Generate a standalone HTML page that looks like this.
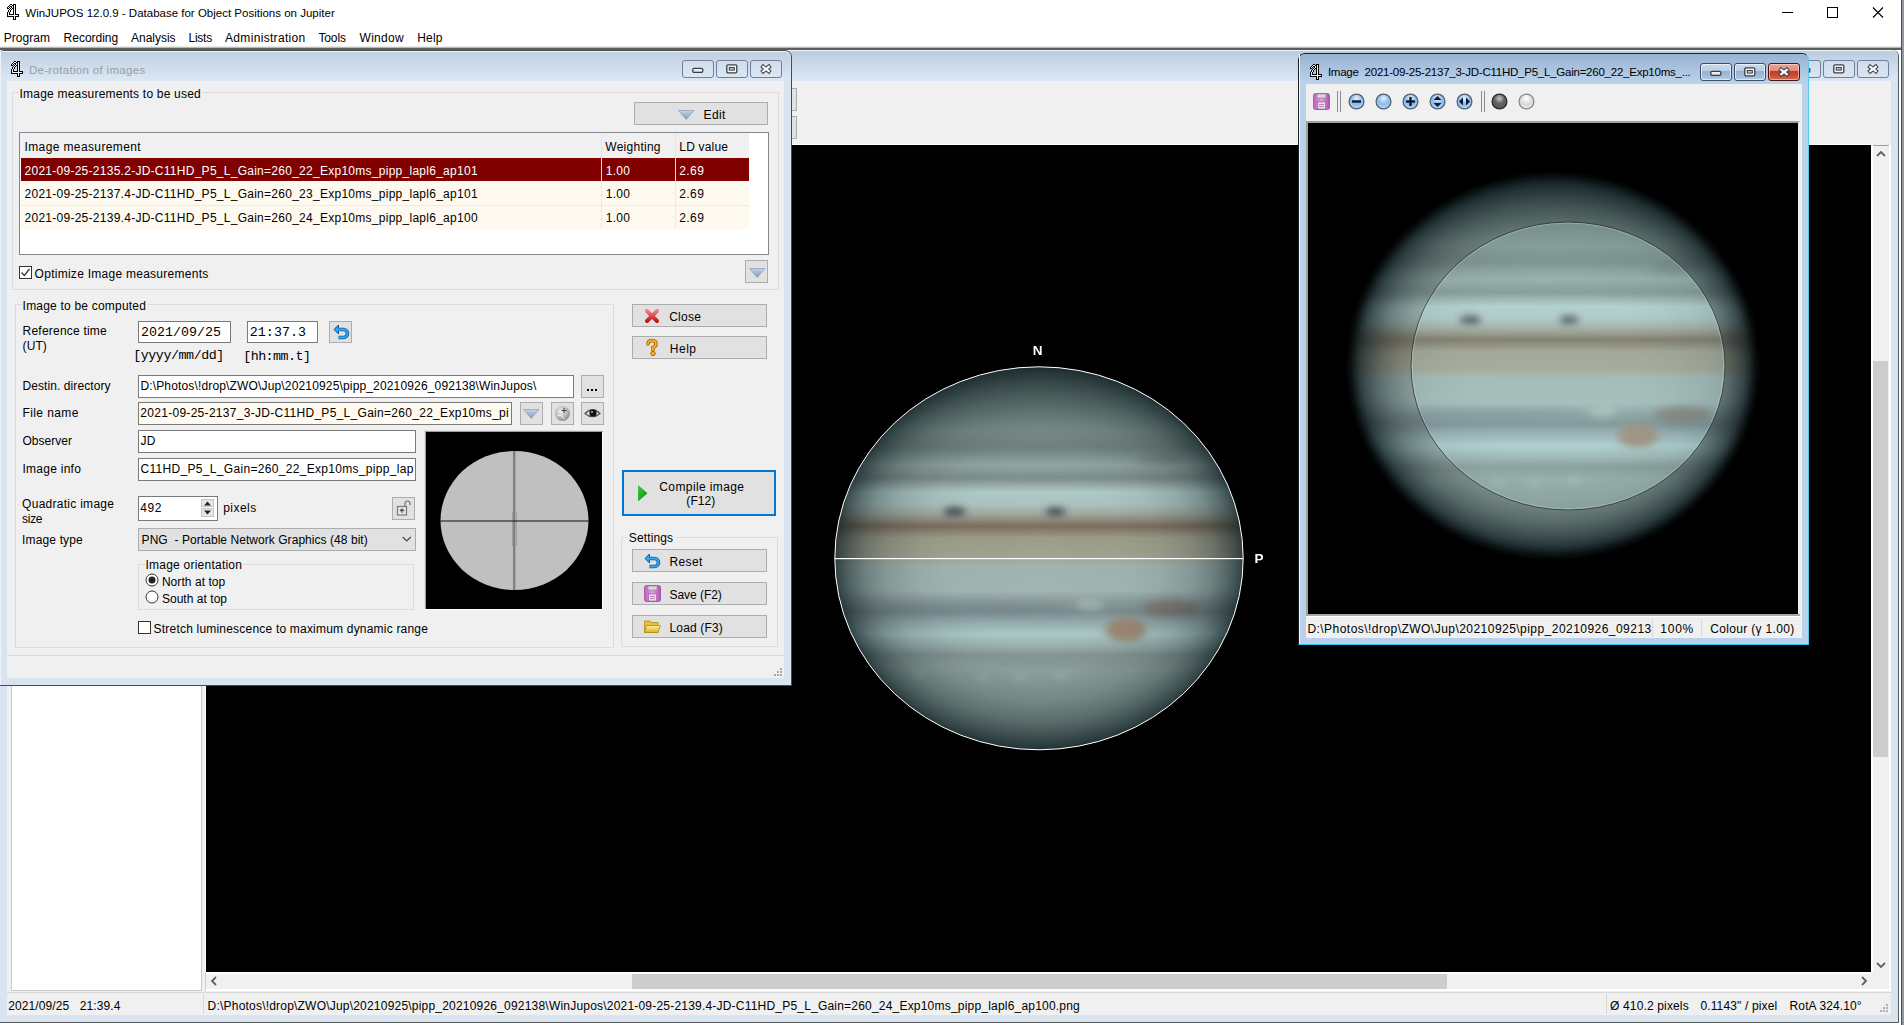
<!DOCTYPE html>
<html><head><meta charset="utf-8"><style>
html,body{margin:0;padding:0;}
body{width:1904px;height:1025px;position:relative;overflow:hidden;background:#fff;font-family:'Liberation Sans', sans-serif;}
div{position:absolute;box-sizing:border-box;}
.t{white-space:pre;}
svg{position:absolute;overflow:visible;}
</style></head><body>
<svg style="left:7px;top:4px" width="12" height="16" shape-rendering="crispEdges"><rect x="3" y="0" width="1" height="1" fill="#000"/><rect x="4" y="0" width="1" height="1" fill="#000"/><rect x="6" y="0" width="1" height="1" fill="#000"/><rect x="7" y="0" width="1" height="1" fill="#000"/><rect x="8" y="0" width="1" height="1" fill="#000"/><rect x="2" y="1" width="1" height="1" fill="#000"/><rect x="3" y="1" width="1" height="1" fill="#f4f4f4"/><rect x="4" y="1" width="1" height="1" fill="#f4f4f4"/><rect x="5" y="1" width="1" height="1" fill="#000"/><rect x="6" y="1" width="1" height="1" fill="#000"/><rect x="7" y="1" width="1" height="1" fill="#f4f4f4"/><rect x="8" y="1" width="1" height="1" fill="#000"/><rect x="1" y="2" width="1" height="1" fill="#000"/><rect x="2" y="2" width="1" height="1" fill="#f4f4f4"/><rect x="3" y="2" width="1" height="1" fill="#000"/><rect x="4" y="2" width="1" height="1" fill="#000"/><rect x="5" y="2" width="1" height="1" fill="#f4f4f4"/><rect x="6" y="2" width="1" height="1" fill="#000"/><rect x="7" y="2" width="1" height="1" fill="#f4f4f4"/><rect x="8" y="2" width="1" height="1" fill="#000"/><rect x="0" y="3" width="1" height="1" fill="#000"/><rect x="1" y="3" width="1" height="1" fill="#f4f4f4"/><rect x="2" y="3" width="1" height="1" fill="#000"/><rect x="4" y="3" width="1" height="1" fill="#000"/><rect x="5" y="3" width="1" height="1" fill="#f4f4f4"/><rect x="6" y="3" width="1" height="1" fill="#000"/><rect x="7" y="3" width="1" height="1" fill="#f4f4f4"/><rect x="8" y="3" width="1" height="1" fill="#000"/><rect x="0" y="4" width="1" height="1" fill="#000"/><rect x="1" y="4" width="1" height="1" fill="#000"/><rect x="3" y="4" width="1" height="1" fill="#000"/><rect x="4" y="4" width="1" height="1" fill="#f4f4f4"/><rect x="5" y="4" width="1" height="1" fill="#000"/><rect x="6" y="4" width="1" height="1" fill="#000"/><rect x="7" y="4" width="1" height="1" fill="#f4f4f4"/><rect x="8" y="4" width="1" height="1" fill="#000"/><rect x="2" y="5" width="1" height="1" fill="#000"/><rect x="3" y="5" width="1" height="1" fill="#f4f4f4"/><rect x="4" y="5" width="1" height="1" fill="#000"/><rect x="6" y="5" width="1" height="1" fill="#000"/><rect x="7" y="5" width="1" height="1" fill="#f4f4f4"/><rect x="8" y="5" width="1" height="1" fill="#000"/><rect x="1" y="6" width="1" height="1" fill="#000"/><rect x="2" y="6" width="1" height="1" fill="#f4f4f4"/><rect x="3" y="6" width="1" height="1" fill="#000"/><rect x="6" y="6" width="1" height="1" fill="#000"/><rect x="7" y="6" width="1" height="1" fill="#f4f4f4"/><rect x="8" y="6" width="1" height="1" fill="#000"/><rect x="1" y="7" width="1" height="1" fill="#000"/><rect x="2" y="7" width="1" height="1" fill="#f4f4f4"/><rect x="3" y="7" width="1" height="1" fill="#000"/><rect x="6" y="7" width="1" height="1" fill="#000"/><rect x="7" y="7" width="1" height="1" fill="#f4f4f4"/><rect x="8" y="7" width="1" height="1" fill="#000"/><rect x="0" y="8" width="1" height="1" fill="#000"/><rect x="1" y="8" width="1" height="1" fill="#f4f4f4"/><rect x="2" y="8" width="1" height="1" fill="#000"/><rect x="6" y="8" width="1" height="1" fill="#000"/><rect x="7" y="8" width="1" height="1" fill="#f4f4f4"/><rect x="8" y="8" width="1" height="1" fill="#000"/><rect x="0" y="9" width="1" height="1" fill="#000"/><rect x="1" y="9" width="1" height="1" fill="#f4f4f4"/><rect x="2" y="9" width="1" height="1" fill="#000"/><rect x="6" y="9" width="1" height="1" fill="#000"/><rect x="7" y="9" width="1" height="1" fill="#f4f4f4"/><rect x="8" y="9" width="1" height="1" fill="#000"/><rect x="0" y="10" width="1" height="1" fill="#000"/><rect x="1" y="10" width="1" height="1" fill="#f4f4f4"/><rect x="2" y="10" width="1" height="1" fill="#000"/><rect x="3" y="10" width="1" height="1" fill="#000"/><rect x="4" y="10" width="1" height="1" fill="#000"/><rect x="5" y="10" width="1" height="1" fill="#000"/><rect x="6" y="10" width="1" height="1" fill="#000"/><rect x="7" y="10" width="1" height="1" fill="#f4f4f4"/><rect x="8" y="10" width="1" height="1" fill="#000"/><rect x="9" y="10" width="1" height="1" fill="#000"/><rect x="10" y="10" width="1" height="1" fill="#000"/><rect x="11" y="10" width="1" height="1" fill="#000"/><rect x="0" y="11" width="1" height="1" fill="#000"/><rect x="1" y="11" width="1" height="1" fill="#f4f4f4"/><rect x="2" y="11" width="1" height="1" fill="#f4f4f4"/><rect x="3" y="11" width="1" height="1" fill="#f4f4f4"/><rect x="4" y="11" width="1" height="1" fill="#f4f4f4"/><rect x="5" y="11" width="1" height="1" fill="#f4f4f4"/><rect x="6" y="11" width="1" height="1" fill="#f4f4f4"/><rect x="7" y="11" width="1" height="1" fill="#f4f4f4"/><rect x="8" y="11" width="1" height="1" fill="#f4f4f4"/><rect x="9" y="11" width="1" height="1" fill="#f4f4f4"/><rect x="10" y="11" width="1" height="1" fill="#f4f4f4"/><rect x="11" y="11" width="1" height="1" fill="#000"/><rect x="0" y="12" width="1" height="1" fill="#000"/><rect x="1" y="12" width="1" height="1" fill="#000"/><rect x="2" y="12" width="1" height="1" fill="#000"/><rect x="3" y="12" width="1" height="1" fill="#000"/><rect x="4" y="12" width="1" height="1" fill="#000"/><rect x="5" y="12" width="1" height="1" fill="#000"/><rect x="6" y="12" width="1" height="1" fill="#000"/><rect x="7" y="12" width="1" height="1" fill="#f4f4f4"/><rect x="8" y="12" width="1" height="1" fill="#000"/><rect x="9" y="12" width="1" height="1" fill="#000"/><rect x="10" y="12" width="1" height="1" fill="#000"/><rect x="11" y="12" width="1" height="1" fill="#000"/><rect x="6" y="13" width="1" height="1" fill="#000"/><rect x="7" y="13" width="1" height="1" fill="#f4f4f4"/><rect x="8" y="13" width="1" height="1" fill="#000"/><rect x="6" y="14" width="1" height="1" fill="#000"/><rect x="7" y="14" width="1" height="1" fill="#f4f4f4"/><rect x="8" y="14" width="1" height="1" fill="#000"/><rect x="6" y="15" width="1" height="1" fill="#000"/><rect x="7" y="15" width="1" height="1" fill="#000"/><rect x="8" y="15" width="1" height="1" fill="#000"/></svg>
<div class="t" style="left:25.30px;top:8.00px;font-size:11.5px;line-height:11.5px;letter-spacing:0.001px;color:#000;">WinJUPOS 12.0.9 - Database for Object Positions on Jupiter</div>
<svg style="left:1781px;top:7px" width="110" height="12"><rect x="1" y="5" width="11" height="1" fill="#000"/><rect x="46.5" y="0.5" width="10" height="10" fill="none" stroke="#000" stroke-width="1"/><path d="M92 0.5 L102 10.5 M102 0.5 L92 10.5" stroke="#000" stroke-width="1.1"/></svg>
<div style="left:1901px;top:0px;width:1px;height:1025px;background:#4f4f4f;"></div>
<div style="left:1902px;top:0px;width:2px;height:1025px;background:#8f99a4;"></div>
<div class="t" style="left:3.70px;top:32.00px;font-size:12px;line-height:12px;letter-spacing:0.057px;color:#000;">Program</div>
<div class="t" style="left:63.60px;top:32.00px;font-size:12px;line-height:12px;letter-spacing:-0.018px;color:#000;">Recording</div>
<div class="t" style="left:131.10px;top:32.00px;font-size:12px;line-height:12px;letter-spacing:-0.032px;color:#000;">Analysis</div>
<div class="t" style="left:188.50px;top:32.00px;font-size:12px;line-height:12px;letter-spacing:-0.257px;color:#000;">Lists</div>
<div class="t" style="left:225.00px;top:32.00px;font-size:12px;line-height:12px;letter-spacing:0.325px;color:#000;">Administration</div>
<div class="t" style="left:318.40px;top:32.00px;font-size:12px;line-height:12px;letter-spacing:-0.114px;color:#000;">Tools</div>
<div class="t" style="left:359.50px;top:32.00px;font-size:12px;line-height:12px;letter-spacing:0.314px;color:#000;">Window</div>
<div class="t" style="left:417.30px;top:32.00px;font-size:12px;line-height:12px;letter-spacing:0.158px;color:#000;">Help</div>
<div style="left:0px;top:46px;width:1901px;height:1px;background:#ececec;"></div>
<div style="left:0px;top:47px;width:1901px;height:1px;background:#b8b8b8;"></div>
<div style="left:0px;top:48px;width:1901px;height:2px;background:#5e5e5e;"></div>
<div style="left:-1px;top:50px;width:1900px;height:973px;background:#d9e4f1;border:1px solid #5a5a5a;border-top:none;border-radius:0 6px 0 0;"></div>
<div style="left:0px;top:50px;width:1898px;height:31px;background:linear-gradient(#bccde0,#dbe7f4);border-radius:0 6px 0 0;border-top:1px solid rgba(255,255,255,0.5);"></div>
<div style="left:1899px;top:50px;width:2px;height:973px;background:#fff;"></div>
<div style="left:1789px;top:60px;width:32px;height:18px;background:linear-gradient(rgba(255,255,255,0.18),rgba(255,255,255,0.08));border:1px solid #6f7f9c;border-radius:3px;"></div>
<svg style="left:1799.0px;top:67.0px" width="12" height="6"><defs><linearGradient id="gmin" x1="0" y1="0" x2="0" y2="1"><stop offset="0" stop-color="#fff"/><stop offset="1" stop-color="#d8d8d8"/></linearGradient></defs><rect x="0.8" y="1.3" width="10" height="4" rx="1.2" fill="url(#gmin)" stroke="#3b4048" stroke-width="1.3"/></svg>
<div style="left:1823px;top:60px;width:32px;height:18px;background:linear-gradient(rgba(255,255,255,0.18),rgba(255,255,255,0.08));border:1px solid #6f7f9c;border-radius:3px;"></div>
<svg style="left:1833.0px;top:64.0px" width="12" height="10"><rect x="0.8" y="0.8" width="10" height="8" rx="1.2" fill="#f4f4f4" stroke="#3b4048" stroke-width="1.3"/><rect x="3.3" y="3.5" width="5" height="2.6" fill="#b4c2d6" stroke="#3b4048" stroke-width="1"/></svg>
<div style="left:1857px;top:60px;width:32px;height:18px;background:linear-gradient(rgba(255,255,255,0.18),rgba(255,255,255,0.08));border:1px solid #6f7f9c;border-radius:3px;"></div>
<svg style="left:1867.0px;top:64.0px" width="12" height="10"><path d="M3.2 2.8 L8.8 7.2 M8.8 2.8 L3.2 7.2" stroke="#3b4048" stroke-width="4.2" stroke-linecap="square"/><path d="M3.2 2.8 L8.8 7.2 M8.8 2.8 L3.2 7.2" stroke="#fafafa" stroke-width="2.2" stroke-linecap="square"/></svg>
<div style="left:7px;top:81px;width:1884px;height:934px;background:#f0f0f0;"></div>
<div style="left:770px;top:88px;width:27px;height:23px;background:#e1e1e1;border:1px solid #adadad;"></div>
<div style="left:770px;top:116px;width:27px;height:23px;background:#e1e1e1;border:1px solid #adadad;"></div>
<div style="left:11px;top:145px;width:191px;height:846px;background:#fff;border:1px solid #c9c9c9;"></div>
<div style="left:205px;top:145px;width:1px;height:828px;background:#fff;"></div>
<div style="left:206px;top:144px;width:1666px;height:1px;background:#fff;"></div>
<div style="left:206px;top:145px;width:1666px;height:827px;background:#000;"></div>
<div style="left:1872px;top:145px;width:17px;height:1px;background:#a0a0a0;"></div>
<div style="left:1871px;top:145px;width:2px;height:828px;background:#fff;"></div>
<div style="left:1889px;top:145px;width:2px;height:846px;background:#fff;"></div>
<div style="left:1873px;top:361px;width:15px;height:396px;background:#cdcdcd;"></div>
<svg style="left:1876px;top:150px" width="10" height="8"><path d="M1 6 L5 2 L9 6" stroke="#606060" stroke-width="1.8" fill="none"/></svg>
<svg style="left:1876px;top:961px" width="10" height="8"><path d="M1 2 L5 6 L9 2" stroke="#606060" stroke-width="1.8" fill="none"/></svg>
<div style="left:206px;top:972px;width:1666px;height:1.5px;background:#fff;"></div>
<div style="left:206px;top:989px;width:1685px;height:2px;background:#fff;"></div>
<div style="left:205px;top:972px;width:1px;height:19px;background:#d0d0d0;"></div>
<div style="left:632px;top:974px;width:815px;height:15px;background:#cdcdcd;"></div>
<svg style="left:210px;top:976px" width="8" height="10"><path d="M6 1 L2 5 L6 9" stroke="#606060" stroke-width="1.8" fill="none"/></svg>
<svg style="left:1860px;top:976px" width="8" height="10"><path d="M2 1 L6 5 L2 9" stroke="#606060" stroke-width="1.8" fill="none"/></svg>
<div style="left:7px;top:992px;width:1884px;height:1px;background:#d7d7d7;"></div>
<div style="left:203px;top:994px;width:1px;height:20px;background:#d7d7d7;"></div>
<div style="left:1606px;top:994px;width:1px;height:20px;background:#d7d7d7;"></div>
<div class="t" style="left:8.20px;top:1000.00px;font-size:12px;line-height:12px;letter-spacing:0.113px;color:#000;">2021/09/25   21:39.4</div>
<div class="t" style="left:207.60px;top:1000.00px;font-size:12px;line-height:12px;letter-spacing:0.205px;color:#000;">D:\Photos\!drop\ZWO\Jup\20210925\pipp_20210926_092138\WinJupos\2021-09-25-2139.4-JD-C11HD_P5_L_Gain=260_24_Exp10ms_pipp_lapl6_ap100.png</div>
<div class="t" style="left:1610.10px;top:1000.00px;font-size:12px;line-height:12px;letter-spacing:0.142px;color:#000;">Ø 410.2 pixels</div>
<div class="t" style="left:1700.40px;top:1000.00px;font-size:12px;line-height:12px;letter-spacing:0.142px;color:#000;">0.1143" / pixel</div>
<div class="t" style="left:1789.60px;top:1000.00px;font-size:12px;line-height:12px;letter-spacing:0.100px;color:#000;">RotA 324.10°</div>
<svg style="left:1880px;top:1004px" width="10" height="10" fill="#b0b0b0"><rect x="6" y="0" width="2" height="2"/><rect x="3" y="3" width="2" height="2"/><rect x="6" y="3" width="2" height="2"/><rect x="0" y="6" width="2" height="2"/><rect x="3" y="6" width="2" height="2"/><rect x="6" y="6" width="2" height="2"/></svg>
<div style="left:0px;top:1023px;width:1901px;height:2px;background:#fff;"></div>
<svg style="left:206px;top:145px" width="1666" height="827"><defs><linearGradient id="jbm" x1="0" y1="0" x2="0" y2="1"><stop offset="0.0005" stop-color="rgb(90,108,106)"/><stop offset="0.0867" stop-color="rgb(110,130,126)"/><stop offset="0.1650" stop-color="rgb(132,152,148)"/><stop offset="0.2094" stop-color="rgb(122,140,136)"/><stop offset="0.2564" stop-color="rgb(150,172,168)"/><stop offset="0.2903" stop-color="rgb(132,148,144)"/><stop offset="0.3269" stop-color="rgb(178,204,202)"/><stop offset="0.3582" stop-color="rgb(175,198,194)"/><stop offset="0.3843" stop-color="rgb(160,170,160)"/><stop offset="0.4000" stop-color="rgb(146,142,125)"/><stop offset="0.4157" stop-color="rgb(124,112,96)"/><stop offset="0.4287" stop-color="rgb(138,130,113)"/><stop offset="0.4470" stop-color="rgb(158,157,139)"/><stop offset="0.4966" stop-color="rgb(162,164,145)"/><stop offset="0.5175" stop-color="rgb(160,180,176)"/><stop offset="0.5828" stop-color="rgb(162,184,180)"/><stop offset="0.6141" stop-color="rgb(140,156,156)"/><stop offset="0.6402" stop-color="rgb(125,142,146)"/><stop offset="0.6663" stop-color="rgb(150,172,174)"/><stop offset="0.6977" stop-color="rgb(175,204,204)"/><stop offset="0.7264" stop-color="rgb(160,182,180)"/><stop offset="0.7525" stop-color="rgb(138,156,154)"/><stop offset="0.7864" stop-color="rgb(150,170,166)"/><stop offset="0.8178" stop-color="rgb(146,166,162)"/><stop offset="0.8700" stop-color="rgb(140,160,156)"/><stop offset="0.9222" stop-color="rgb(132,152,148)"/><stop offset="1.0000" stop-color="rgb(112,130,128)"/></linearGradient><radialGradient id="jlm" cx="0.5" cy="0.5" r="0.5"><stop offset="0" stop-color="rgb(5,20,25)" stop-opacity="0.000"/><stop offset="0.45" stop-color="rgb(5,20,25)" stop-opacity="0.020"/><stop offset="0.6" stop-color="rgb(5,20,25)" stop-opacity="0.070"/><stop offset="0.75" stop-color="rgb(5,20,25)" stop-opacity="0.180"/><stop offset="0.85" stop-color="rgb(5,20,25)" stop-opacity="0.320"/><stop offset="0.92" stop-color="rgb(5,20,25)" stop-opacity="0.480"/><stop offset="0.97" stop-color="rgb(5,20,25)" stop-opacity="0.620"/><stop offset="1.0" stop-color="rgb(5,20,25)" stop-opacity="0.740"/></radialGradient><filter id="jfm" x="-50%" y="-50%" width="200%" height="200%"><feGaussianBlur stdDeviation="3.5"/></filter><clipPath id="jcm"><ellipse cx="833" cy="413.29999999999995" rx="204.2" ry="191.5"/></clipPath></defs><g clip-path="url(#jcm)"><ellipse cx="833" cy="413.29999999999995" rx="204.2" ry="191.5" fill="url(#jbm)"/><g filter="url(#jfm)"><ellipse cx="822.8" cy="302.2" rx="122.5" ry="4.8" fill="#6f807c" opacity="0.3"/><ellipse cx="853.4" cy="332.9" rx="122.5" ry="3.8" fill="#7a8a86" opacity="0.3"/><ellipse cx="955.5" cy="313.7" rx="24.5" ry="5.7" fill="#607070" opacity="0.35"/><ellipse cx="771.7" cy="463.1" rx="91.9" ry="5.7" fill="#74848a" opacity="0.35"/><ellipse cx="964.9" cy="463.1" rx="28.6" ry="8.6" fill="#7a6a5a" opacity="0.55"/><ellipse cx="873.8" cy="518.6" rx="102.1" ry="3.8" fill="#7a8a86" opacity="0.25"/><ellipse cx="748.7" cy="366.8" rx="11.2" ry="4.6" fill="#3c3c48" opacity="0.85"/><ellipse cx="849.5" cy="366.8" rx="10.2" ry="4.2" fill="#3c3c48" opacity="0.85"/><ellipse cx="884.0" cy="460.2" rx="14.3" ry="5.7" fill="#cfe2de" opacity="0.35"/><ellipse cx="712.9" cy="529.9" rx="8.2" ry="3.8" fill="#b8cec8" opacity="0.35"/><ellipse cx="777.0" cy="532.8" rx="8.2" ry="3.8" fill="#b8cec8" opacity="0.35"/><ellipse cx="814.0" cy="532.8" rx="8.2" ry="3.8" fill="#b8cec8" opacity="0.35"/><ellipse cx="855.1" cy="530.7" rx="8.2" ry="3.8" fill="#b8cec8" opacity="0.35"/><ellipse cx="919.6" cy="484.5" rx="21.0" ry="12.6" fill="#9c8a74" opacity="0.85"/><ellipse cx="919.6" cy="484.5" rx="14.3" ry="8.6" fill="#a08870" opacity="0.7"/></g><ellipse cx="833" cy="413.29999999999995" rx="204.2" ry="191.5" fill="url(#jlm)"/></g><ellipse cx="833" cy="413.29999999999995" rx="204.2" ry="191.5" fill="none" stroke="#fff" stroke-width="1"/><rect x="628.8" y="413" width="408.4" height="1.2" fill="#fff"/><text x="831.5999999999999" y="210" font-size="13.5" font-weight="bold" font-family="Liberation Sans" fill="#fff" text-anchor="middle">N</text><text x="1048.5" y="418" font-size="13.5" font-weight="bold" font-family="Liberation Sans" fill="#fff">P</text></svg>
<div style="left:-1px;top:50px;width:793px;height:636px;background:#d9e4f1;border:1px solid #4a4a4a;border-radius:5px 7px 0 0;"></div>
<div style="left:0px;top:51px;width:790px;height:30px;background:linear-gradient(#bfd0e2,#dce8f4);border-radius:4px 6px 0 0;border-top:1px solid rgba(255,255,255,0.6);"></div>
<div style="left:0px;top:51px;width:1px;height:634px;background:#eef3f9;"></div>
<svg style="left:11px;top:61px" width="12" height="16" shape-rendering="crispEdges"><rect x="3" y="0" width="1" height="1" fill="#000"/><rect x="4" y="0" width="1" height="1" fill="#000"/><rect x="6" y="0" width="1" height="1" fill="#000"/><rect x="7" y="0" width="1" height="1" fill="#000"/><rect x="8" y="0" width="1" height="1" fill="#000"/><rect x="2" y="1" width="1" height="1" fill="#000"/><rect x="3" y="1" width="1" height="1" fill="#f4f4f4"/><rect x="4" y="1" width="1" height="1" fill="#f4f4f4"/><rect x="5" y="1" width="1" height="1" fill="#000"/><rect x="6" y="1" width="1" height="1" fill="#000"/><rect x="7" y="1" width="1" height="1" fill="#f4f4f4"/><rect x="8" y="1" width="1" height="1" fill="#000"/><rect x="1" y="2" width="1" height="1" fill="#000"/><rect x="2" y="2" width="1" height="1" fill="#f4f4f4"/><rect x="3" y="2" width="1" height="1" fill="#000"/><rect x="4" y="2" width="1" height="1" fill="#000"/><rect x="5" y="2" width="1" height="1" fill="#f4f4f4"/><rect x="6" y="2" width="1" height="1" fill="#000"/><rect x="7" y="2" width="1" height="1" fill="#f4f4f4"/><rect x="8" y="2" width="1" height="1" fill="#000"/><rect x="0" y="3" width="1" height="1" fill="#000"/><rect x="1" y="3" width="1" height="1" fill="#f4f4f4"/><rect x="2" y="3" width="1" height="1" fill="#000"/><rect x="4" y="3" width="1" height="1" fill="#000"/><rect x="5" y="3" width="1" height="1" fill="#f4f4f4"/><rect x="6" y="3" width="1" height="1" fill="#000"/><rect x="7" y="3" width="1" height="1" fill="#f4f4f4"/><rect x="8" y="3" width="1" height="1" fill="#000"/><rect x="0" y="4" width="1" height="1" fill="#000"/><rect x="1" y="4" width="1" height="1" fill="#000"/><rect x="3" y="4" width="1" height="1" fill="#000"/><rect x="4" y="4" width="1" height="1" fill="#f4f4f4"/><rect x="5" y="4" width="1" height="1" fill="#000"/><rect x="6" y="4" width="1" height="1" fill="#000"/><rect x="7" y="4" width="1" height="1" fill="#f4f4f4"/><rect x="8" y="4" width="1" height="1" fill="#000"/><rect x="2" y="5" width="1" height="1" fill="#000"/><rect x="3" y="5" width="1" height="1" fill="#f4f4f4"/><rect x="4" y="5" width="1" height="1" fill="#000"/><rect x="6" y="5" width="1" height="1" fill="#000"/><rect x="7" y="5" width="1" height="1" fill="#f4f4f4"/><rect x="8" y="5" width="1" height="1" fill="#000"/><rect x="1" y="6" width="1" height="1" fill="#000"/><rect x="2" y="6" width="1" height="1" fill="#f4f4f4"/><rect x="3" y="6" width="1" height="1" fill="#000"/><rect x="6" y="6" width="1" height="1" fill="#000"/><rect x="7" y="6" width="1" height="1" fill="#f4f4f4"/><rect x="8" y="6" width="1" height="1" fill="#000"/><rect x="1" y="7" width="1" height="1" fill="#000"/><rect x="2" y="7" width="1" height="1" fill="#f4f4f4"/><rect x="3" y="7" width="1" height="1" fill="#000"/><rect x="6" y="7" width="1" height="1" fill="#000"/><rect x="7" y="7" width="1" height="1" fill="#f4f4f4"/><rect x="8" y="7" width="1" height="1" fill="#000"/><rect x="0" y="8" width="1" height="1" fill="#000"/><rect x="1" y="8" width="1" height="1" fill="#f4f4f4"/><rect x="2" y="8" width="1" height="1" fill="#000"/><rect x="6" y="8" width="1" height="1" fill="#000"/><rect x="7" y="8" width="1" height="1" fill="#f4f4f4"/><rect x="8" y="8" width="1" height="1" fill="#000"/><rect x="0" y="9" width="1" height="1" fill="#000"/><rect x="1" y="9" width="1" height="1" fill="#f4f4f4"/><rect x="2" y="9" width="1" height="1" fill="#000"/><rect x="6" y="9" width="1" height="1" fill="#000"/><rect x="7" y="9" width="1" height="1" fill="#f4f4f4"/><rect x="8" y="9" width="1" height="1" fill="#000"/><rect x="0" y="10" width="1" height="1" fill="#000"/><rect x="1" y="10" width="1" height="1" fill="#f4f4f4"/><rect x="2" y="10" width="1" height="1" fill="#000"/><rect x="3" y="10" width="1" height="1" fill="#000"/><rect x="4" y="10" width="1" height="1" fill="#000"/><rect x="5" y="10" width="1" height="1" fill="#000"/><rect x="6" y="10" width="1" height="1" fill="#000"/><rect x="7" y="10" width="1" height="1" fill="#f4f4f4"/><rect x="8" y="10" width="1" height="1" fill="#000"/><rect x="9" y="10" width="1" height="1" fill="#000"/><rect x="10" y="10" width="1" height="1" fill="#000"/><rect x="11" y="10" width="1" height="1" fill="#000"/><rect x="0" y="11" width="1" height="1" fill="#000"/><rect x="1" y="11" width="1" height="1" fill="#f4f4f4"/><rect x="2" y="11" width="1" height="1" fill="#f4f4f4"/><rect x="3" y="11" width="1" height="1" fill="#f4f4f4"/><rect x="4" y="11" width="1" height="1" fill="#f4f4f4"/><rect x="5" y="11" width="1" height="1" fill="#f4f4f4"/><rect x="6" y="11" width="1" height="1" fill="#f4f4f4"/><rect x="7" y="11" width="1" height="1" fill="#f4f4f4"/><rect x="8" y="11" width="1" height="1" fill="#f4f4f4"/><rect x="9" y="11" width="1" height="1" fill="#f4f4f4"/><rect x="10" y="11" width="1" height="1" fill="#f4f4f4"/><rect x="11" y="11" width="1" height="1" fill="#000"/><rect x="0" y="12" width="1" height="1" fill="#000"/><rect x="1" y="12" width="1" height="1" fill="#000"/><rect x="2" y="12" width="1" height="1" fill="#000"/><rect x="3" y="12" width="1" height="1" fill="#000"/><rect x="4" y="12" width="1" height="1" fill="#000"/><rect x="5" y="12" width="1" height="1" fill="#000"/><rect x="6" y="12" width="1" height="1" fill="#000"/><rect x="7" y="12" width="1" height="1" fill="#f4f4f4"/><rect x="8" y="12" width="1" height="1" fill="#000"/><rect x="9" y="12" width="1" height="1" fill="#000"/><rect x="10" y="12" width="1" height="1" fill="#000"/><rect x="11" y="12" width="1" height="1" fill="#000"/><rect x="6" y="13" width="1" height="1" fill="#000"/><rect x="7" y="13" width="1" height="1" fill="#f4f4f4"/><rect x="8" y="13" width="1" height="1" fill="#000"/><rect x="6" y="14" width="1" height="1" fill="#000"/><rect x="7" y="14" width="1" height="1" fill="#f4f4f4"/><rect x="8" y="14" width="1" height="1" fill="#000"/><rect x="6" y="15" width="1" height="1" fill="#000"/><rect x="7" y="15" width="1" height="1" fill="#000"/><rect x="8" y="15" width="1" height="1" fill="#000"/></svg>
<div class="t" style="left:28.90px;top:65.00px;font-size:11.5px;line-height:11.5px;letter-spacing:0.318px;color:#9c9ca6;">De-rotation of images</div>
<div style="left:682px;top:60px;width:32px;height:18px;background:linear-gradient(rgba(255,255,255,0.18),rgba(255,255,255,0.08));border:1px solid #6f7f9c;border-radius:3px;"></div>
<svg style="left:692.0px;top:67.0px" width="12" height="6"><defs><linearGradient id="gmin" x1="0" y1="0" x2="0" y2="1"><stop offset="0" stop-color="#fff"/><stop offset="1" stop-color="#d8d8d8"/></linearGradient></defs><rect x="0.8" y="1.3" width="10" height="4" rx="1.2" fill="url(#gmin)" stroke="#3b4048" stroke-width="1.3"/></svg>
<div style="left:716px;top:60px;width:32px;height:18px;background:linear-gradient(rgba(255,255,255,0.18),rgba(255,255,255,0.08));border:1px solid #6f7f9c;border-radius:3px;"></div>
<svg style="left:726.0px;top:64.0px" width="12" height="10"><rect x="0.8" y="0.8" width="10" height="8" rx="1.2" fill="#f4f4f4" stroke="#3b4048" stroke-width="1.3"/><rect x="3.3" y="3.5" width="5" height="2.6" fill="#b4c2d6" stroke="#3b4048" stroke-width="1"/></svg>
<div style="left:750px;top:60px;width:32px;height:18px;background:linear-gradient(rgba(255,255,255,0.18),rgba(255,255,255,0.08));border:1px solid #6f7f9c;border-radius:3px;"></div>
<svg style="left:760.0px;top:64.0px" width="12" height="10"><path d="M3.2 2.8 L8.8 7.2 M8.8 2.8 L3.2 7.2" stroke="#3b4048" stroke-width="4.2" stroke-linecap="square"/><path d="M3.2 2.8 L8.8 7.2 M8.8 2.8 L3.2 7.2" stroke="#fafafa" stroke-width="2.2" stroke-linecap="square"/></svg>
<div style="left:7px;top:81px;width:777px;height:597px;background:#f0f0f0;"></div>
<div style="left:12px;top:92px;width:767px;height:198px;border:1px solid #dcdcdc;"></div>
<div class="t" style="left:19.50px;top:88.00px;font-size:12px;line-height:12px;letter-spacing:0.208px;color:#000;background:#f0f0f0;padding:0 1px;margin-left:-1px;">Image measurements to be used</div>
<div style="left:634px;top:102px;width:134px;height:23px;background:#e1e1e1;border:1px solid #adadad;"></div>
<svg style="left:678px;top:110px" width="17" height="10"><defs><linearGradient id="tri" x1="0" y1="0" x2="0" y2="1"><stop offset="0" stop-color="#c4d4e6"/><stop offset="1" stop-color="#7d9bbf"/></linearGradient></defs><path d="M0.5 0.5 H16 L8.25 9.5 Z" fill="url(#tri)" stroke="#8aa3c0" stroke-width="0.8"/></svg>
<div class="t" style="left:703.60px;top:109.00px;font-size:12px;line-height:12px;letter-spacing:0.358px;color:#000;">Edit</div>
<div style="left:19px;top:132px;width:750px;height:123px;background:#fff;border:1px solid #828790;"></div>
<div style="left:20px;top:133px;width:729px;height:25px;background:#f0f0f0;"></div>
<div style="left:601px;top:133px;width:1px;height:96px;background:#e5e5e5;"></div>
<div style="left:675px;top:133px;width:1px;height:96px;background:#e5e5e5;"></div>
<div class="t" style="left:24.50px;top:141.00px;font-size:12px;line-height:12px;letter-spacing:0.381px;color:#000;">Image measurement</div>
<div class="t" style="left:605.30px;top:141.00px;font-size:12px;line-height:12px;letter-spacing:0.263px;color:#000;">Weighting</div>
<div class="t" style="left:679.30px;top:141.00px;font-size:12px;line-height:12px;letter-spacing:0.184px;color:#000;">LD value</div>
<div style="left:21px;top:158px;width:728px;height:23px;background:#800000;"></div>
<div style="left:601px;top:158px;width:1px;height:23px;background:#e8e0e0;"></div>
<div style="left:675px;top:158px;width:1px;height:23px;background:#e8e0e0;"></div>
<div style="left:21px;top:181px;width:728px;height:24px;background:#fffaf0;"></div>
<div style="left:21px;top:205px;width:728px;height:1px;background:#f0ece4;"></div>
<div style="left:21px;top:206px;width:728px;height:23px;background:#fffaf0;"></div>
<div style="left:601px;top:181px;width:1px;height:48px;background:#ede8e0;"></div>
<div style="left:675px;top:181px;width:1px;height:48px;background:#ede8e0;"></div>
<div class="t" style="left:24.50px;top:165.00px;font-size:12px;line-height:12px;letter-spacing:0.268px;color:#fff;">2021-09-25-2135.2-JD-C11HD_P5_L_Gain=260_22_Exp10ms_pipp_lapl6_ap101</div>
<div class="t" style="left:605.70px;top:165.00px;font-size:12px;line-height:12px;letter-spacing:0.267px;color:#fff;">1.00</div>
<div class="t" style="left:679.30px;top:165.00px;font-size:12px;line-height:12px;letter-spacing:0.400px;color:#fff;">2.69</div>
<div class="t" style="left:24.50px;top:188.00px;font-size:12px;line-height:12px;letter-spacing:0.268px;color:#000;">2021-09-25-2137.4-JD-C11HD_P5_L_Gain=260_23_Exp10ms_pipp_lapl6_ap101</div>
<div class="t" style="left:605.70px;top:188.00px;font-size:12px;line-height:12px;letter-spacing:0.267px;color:#000;">1.00</div>
<div class="t" style="left:679.30px;top:188.00px;font-size:12px;line-height:12px;letter-spacing:0.400px;color:#000;">2.69</div>
<div class="t" style="left:24.50px;top:212.00px;font-size:12px;line-height:12px;letter-spacing:0.268px;color:#000;">2021-09-25-2139.4-JD-C11HD_P5_L_Gain=260_24_Exp10ms_pipp_lapl6_ap100</div>
<div class="t" style="left:605.70px;top:212.00px;font-size:12px;line-height:12px;letter-spacing:0.267px;color:#000;">1.00</div>
<div class="t" style="left:679.30px;top:212.00px;font-size:12px;line-height:12px;letter-spacing:0.400px;color:#000;">2.69</div>
<div style="left:19px;top:266px;width:13px;height:13px;background:#fff;border:1px solid #333;"></div>
<svg style="left:20px;top:267px" width="11" height="11"><path d="M1.5 5.5 L4.3 8.5 L9.5 2" stroke="#333" stroke-width="1.3" fill="none"/></svg>
<div class="t" style="left:34.60px;top:268.00px;font-size:12px;line-height:12px;letter-spacing:0.266px;color:#000;">Optimize Image measurements</div>
<div style="left:745px;top:260px;width:23px;height:23px;background:#e1e1e1;border:1px solid #adadad;"></div>
<svg style="left:749px;top:268px" width="17" height="10"><path d="M0.5 0.5 H16 L8.25 9.5 Z" fill="url(#tri)" stroke="#8aa3c0" stroke-width="0.8"/></svg>
<div style="left:15px;top:304px;width:599px;height:344px;border:1px solid #dcdcdc;"></div>
<div class="t" style="left:22.60px;top:300.00px;font-size:12px;line-height:12px;letter-spacing:0.202px;color:#000;background:#f0f0f0;padding:0 1px;margin-left:-1px;">Image to be computed</div>
<div class="t" style="left:22.60px;top:325.00px;font-size:12px;line-height:12px;letter-spacing:0.214px;color:#000;">Reference time</div>
<div class="t" style="left:22.60px;top:340.00px;font-size:12px;line-height:12px;letter-spacing:0.087px;color:#000;">(UT)</div>
<div style="left:138px;top:321px;width:93px;height:22px;background:#fff;border:1px solid #7a7a7a;"></div>
<div class="t" style="left:141.10px;top:326.00px;font-size:13.3px;line-height:13.3px;font-family:'Liberation Mono', monospace;letter-spacing:0.007px;color:#000;">2021/09/25</div>
<div style="left:247px;top:321px;width:71px;height:22px;background:#fff;border:1px solid #7a7a7a;"></div>
<div class="t" style="left:249.80px;top:326.00px;font-size:13.3px;line-height:13.3px;font-family:'Liberation Mono', monospace;letter-spacing:0.051px;color:#000;">21:37.3</div>
<div style="left:329px;top:321px;width:23px;height:22px;background:#e1e1e1;border:1px solid #adadad;"></div>
<svg style="left:333px;top:324px" width="17" height="16"><path d="M2.5 5.5 H10.5 A4 4 0 0 1 10.5 13.5 H5.5" stroke="#0b5fa8" stroke-width="3.6" fill="none"/><path d="M5.5 1 L1 5.5 L5.5 10 Z" fill="#2a9be8" stroke="#0b5fa8" stroke-width="1"/><path d="M3 5.5 H10.5 A4 4 0 0 1 10.5 13.5 H5.5" stroke="#3aa8f0" stroke-width="1.8" fill="none"/></svg>
<div class="t" style="left:133.20px;top:349.00px;font-size:13.3px;line-height:13.3px;font-family:'Liberation Mono', monospace;letter-spacing:-0.418px;color:#000;">[yyyy/mm/dd]</div>
<div class="t" style="left:243.20px;top:350.00px;font-size:13.3px;line-height:13.3px;font-family:'Liberation Mono', monospace;letter-spacing:-0.508px;color:#000;">[hh:mm.t]</div>
<div class="t" style="left:22.50px;top:380.00px;font-size:12px;line-height:12px;letter-spacing:0.085px;color:#000;">Destin. directory</div>
<div style="left:138px;top:375px;width:436px;height:23px;background:#fff;border:1px solid #7a7a7a;"></div>
<div class="t" style="left:140.40px;top:380.00px;font-size:12px;line-height:12px;letter-spacing:0.156px;color:#000;">D:\Photos\!drop\ZWO\Jup\20210925\pipp_20210926_092138\WinJupos\</div>
<div style="left:581px;top:375px;width:23px;height:23px;background:#e1e1e1;border:1px solid #adadad;"></div>
<svg style="left:587px;top:389px" width="12" height="3" fill="#000"><rect x="0" y="0" width="2" height="2"/><rect x="4" y="0" width="2" height="2"/><rect x="8" y="0" width="2" height="2"/></svg>
<div class="t" style="left:22.50px;top:407.00px;font-size:12px;line-height:12px;letter-spacing:0.397px;color:#000;">File name</div>
<div style="left:138px;top:402px;width:374px;height:23px;background:#fffaf0;border:1px solid #7a7a7a;overflow:hidden;"></div>
<div style="left:139px;top:403px;width:370px;height:21px;overflow:hidden;"><div class="t" style="left:1.30px;top:4.00px;font-size:12px;line-height:12px;letter-spacing:0.291px;color:#000;">2021-09-25-2137_3-JD-C11HD_P5_L_Gain=260_22_Exp10ms_pipp_lapl6_ap101</div></div>
<div style="left:520px;top:402px;width:23px;height:23px;background:#e1e1e1;border:1px solid #adadad;"></div>
<svg style="left:523px;top:409px" width="17" height="10"><path d="M0.5 0.5 H16 L8.25 9.5 Z" fill="url(#tri)" stroke="#8aa3c0" stroke-width="0.8"/></svg>
<div style="left:551px;top:402px;width:23px;height:23px;background:#e1e1e1;border:1px solid #adadad;"></div>
<svg style="left:554px;top:405px" width="17" height="17"><defs><radialGradient id="glb" cx="0.4" cy="0.35" r="0.7"><stop offset="0" stop-color="#f4f4f4"/><stop offset="1" stop-color="#8a8a8a"/></radialGradient></defs><circle cx="8.5" cy="8.5" r="7.5" fill="url(#glb)"/><path d="M10 3 V8 M7.5 5.5 H12.5" stroke="#333" stroke-width="0.9"/><path d="M3 11 Q8 9 10 14" stroke="#fff" stroke-width="0.8" fill="none"/></svg>
<div style="left:581px;top:402px;width:23px;height:23px;background:#e1e1e1;border:1px solid #adadad;"></div>
<svg style="left:584px;top:407px" width="17" height="13"><path d="M1 6.5 Q8.5 -1 16 6.5 Q8.5 13 1 6.5 Z" fill="#e8e8e8" stroke="#555" stroke-width="1.2"/><circle cx="9" cy="6" r="3.6" fill="#111"/><circle cx="8" cy="5" r="1" fill="#bbb"/></svg>
<div class="t" style="left:22.50px;top:435.00px;font-size:12px;line-height:12px;letter-spacing:0.029px;color:#000;">Observer</div>
<div style="left:138px;top:430px;width:278px;height:23px;background:#fff;border:1px solid #7a7a7a;"></div>
<div class="t" style="left:140.50px;top:435.00px;font-size:12px;line-height:12px;letter-spacing:0.288px;color:#000;">JD</div>
<div class="t" style="left:22.50px;top:463.00px;font-size:12px;line-height:12px;letter-spacing:0.257px;color:#000;">Image info</div>
<div style="left:138px;top:458px;width:278px;height:23px;background:#fff;border:1px solid #7a7a7a;overflow:hidden;"></div>
<div class="t" style="left:140.50px;top:463.00px;font-size:12px;line-height:12px;letter-spacing:0.315px;color:#000;">C11HD_P5_L_Gain=260_22_Exp10ms_pipp_lap</div>
<div style="left:424px;top:430px;width:179px;height:180px;background:#000;border:1px solid #e3e3e3;border-right-color:#fff;border-bottom-color:#fff;"></div>
<div style="left:425px;top:431px;width:178px;height:1px;background:#a0a0a0;"></div>
<div style="left:425px;top:431px;width:1px;height:178px;background:#a0a0a0;"></div>
<svg style="left:426px;top:432px" width="176" height="177"><ellipse cx="88.5" cy="88.5" rx="74" ry="69.5" fill="#c0c0c0"/><rect x="87" y="19" width="2.4" height="139" fill="#808080"/><rect x="86" y="80" width="1" height="34" fill="#a0a0a0"/><rect x="90" y="80" width="1" height="34" fill="#a0a0a0"/><rect x="14" y="88.5" width="149" height="1" fill="#101010"/></svg>
<div class="t" style="left:22.10px;top:498.00px;font-size:12px;line-height:12px;letter-spacing:0.272px;color:#000;">Quadratic image</div>
<div class="t" style="left:22.10px;top:513.00px;font-size:12px;line-height:12px;letter-spacing:-0.295px;color:#000;">size</div>
<div style="left:138px;top:496px;width:80px;height:25px;background:#fff;border:1px solid #7a7a7a;"></div>
<div class="t" style="left:140.30px;top:502.00px;font-size:12px;line-height:12px;letter-spacing:0.614px;color:#000;">492</div>
<div style="left:201px;top:499px;width:13px;height:8px;background:#e6e6e6;border:1px solid #c5c5c5;"></div>
<div style="left:201px;top:508px;width:13px;height:9px;background:#e6e6e6;border:1px solid #c5c5c5;"></div>
<svg style="left:203px;top:500px" width="9" height="16" fill="#222"><path d="M4.5 1.5 L8 5.5 H1 Z"/><path d="M1 10.5 H8 L4.5 14.5 Z"/></svg>
<div class="t" style="left:223.20px;top:502.00px;font-size:12px;line-height:12px;letter-spacing:0.455px;color:#000;">pixels</div>
<div style="left:392px;top:497px;width:23px;height:23px;background:#e1e1e1;border:1px solid #adadad;"></div>
<svg style="left:396px;top:500px" width="15" height="17"><path d="M9 6 V3.5 A2.5 2.5 0 0 1 14 3.5 V5" stroke="#777" stroke-width="1.2" fill="none"/><rect x="1.5" y="6.5" width="9" height="8.5" fill="#e8e8e8" stroke="#777" stroke-width="1.2"/><path d="M6 13 V9.5 M4 11 L6 9 L8 11" stroke="#555" stroke-width="1.2" fill="none"/></svg>
<div class="t" style="left:22.10px;top:534.00px;font-size:12px;line-height:12px;letter-spacing:0.143px;color:#000;">Image type</div>
<div style="left:138px;top:528px;width:278px;height:23px;background:#e1e1e1;border:1px solid #adadad;"></div>
<div class="t" style="left:141.60px;top:534.00px;font-size:12px;line-height:12px;letter-spacing:0.052px;color:#000;">PNG  - Portable Network Graphics (48 bit)</div>
<svg style="left:402px;top:536px" width="10" height="7"><path d="M0.8 1 L4.7 5 L8.8 1" stroke="#444" stroke-width="1.1" fill="none"/></svg>
<div style="left:138px;top:564px;width:276px;height:46px;border:1px solid #dcdcdc;"></div>
<div class="t" style="left:145.50px;top:559.00px;font-size:12px;line-height:12px;letter-spacing:0.233px;color:#000;background:#f0f0f0;padding:0 1px;margin-left:-1px;">Image orientation</div>
<svg style="left:145px;top:573px" width="15" height="32"><circle cx="7" cy="7" r="6" fill="#fff" stroke="#333" stroke-width="1"/><circle cx="7" cy="7" r="3.5" fill="#222"/><circle cx="7" cy="24" r="6" fill="#fff" stroke="#333" stroke-width="1"/></svg>
<div class="t" style="left:161.90px;top:576.00px;font-size:12px;line-height:12px;letter-spacing:0.060px;color:#000;">North at top</div>
<div class="t" style="left:161.90px;top:593.00px;font-size:12px;line-height:12px;letter-spacing:0.040px;color:#000;">South at top</div>
<div style="left:138px;top:621px;width:13px;height:13px;background:#fff;border:1px solid #333;"></div>
<div class="t" style="left:153.60px;top:623.00px;font-size:12px;line-height:12px;letter-spacing:0.202px;color:#000;">Stretch luminescence to maximum dynamic range</div>
<div style="left:632px;top:304px;width:135px;height:23px;background:#e1e1e1;border:1px solid #adadad;"></div>
<svg style="left:644px;top:308px" width="16" height="16"><defs><linearGradient id="rx" x1="0" y1="0" x2="0" y2="1"><stop offset="0" stop-color="#f08080"/><stop offset="1" stop-color="#c01818"/></linearGradient></defs><path d="M3 3 L13 13 M13 3 L3 13" stroke="url(#rx)" stroke-width="4" stroke-linecap="round"/></svg>
<div class="t" style="left:669.20px;top:311.00px;font-size:12px;line-height:12px;letter-spacing:0.268px;color:#000;">Close</div>
<div style="left:632px;top:336px;width:135px;height:23px;background:#e1e1e1;border:1px solid #adadad;"></div>
<svg style="left:645px;top:339px" width="14" height="18"><path d="M3 5 Q3 1.5 7 1.5 Q11 1.5 11 5 Q11 7.5 8 8.5 V11" stroke="#b06000" stroke-width="3.6" fill="none" stroke-linecap="round"/><path d="M3 5 Q3 1.5 7 1.5 Q11 1.5 11 5 Q11 7.5 8 8.5 V11" stroke="#f6b030" stroke-width="1.8" fill="none" stroke-linecap="round"/><circle cx="8" cy="14.5" r="2.2" fill="#f6b030" stroke="#b06000" stroke-width="1"/></svg>
<div class="t" style="left:669.70px;top:343.00px;font-size:12px;line-height:12px;letter-spacing:0.557px;color:#000;">Help</div>
<div style="left:622px;top:470px;width:154px;height:46px;background:#e1e1e1;border:2px solid #0078d7;"></div>
<svg style="left:638px;top:485px" width="10" height="17"><defs><linearGradient id="gt" x1="0" y1="0" x2="1" y2="1"><stop offset="0" stop-color="#3ccf3c"/><stop offset="1" stop-color="#0a8a0a"/></linearGradient></defs><path d="M0 0 L9.5 8.2 L0 16.4 Z" fill="url(#gt)"/></svg>
<div class="t" style="left:659.30px;top:481.00px;font-size:12px;line-height:12px;letter-spacing:0.393px;color:#000;">Compile image</div>
<div class="t" style="left:686.30px;top:495.00px;font-size:12px;line-height:12px;letter-spacing:0.097px;color:#000;">(F12)</div>
<div style="left:621px;top:537px;width:157px;height:110px;border:1px solid #dcdcdc;"></div>
<div class="t" style="left:628.80px;top:532.00px;font-size:12px;line-height:12px;letter-spacing:0.129px;color:#000;background:#f0f0f0;padding:0 1px;margin-left:-1px;">Settings</div>
<div style="left:632px;top:549px;width:135px;height:23px;background:#e1e1e1;border:1px solid #adadad;"></div>
<svg style="left:644px;top:553px" width="17" height="16"><path d="M2.5 5.5 H10.5 A4 4 0 0 1 10.5 13.5 H5.5" stroke="#0b5fa8" stroke-width="3.6" fill="none"/><path d="M5.5 1 L1 5.5 L5.5 10 Z" fill="#2a9be8" stroke="#0b5fa8" stroke-width="1"/><path d="M3 5.5 H10.5 A4 4 0 0 1 10.5 13.5 H5.5" stroke="#3aa8f0" stroke-width="1.8" fill="none"/></svg>
<div class="t" style="left:669.50px;top:556.00px;font-size:12px;line-height:12px;letter-spacing:0.375px;color:#000;">Reset</div>
<div style="left:632px;top:582px;width:135px;height:23px;background:#e1e1e1;border:1px solid #adadad;"></div>
<svg style="left:644px;top:585px" width="17" height="17"><defs><linearGradient id="fl644" x1="0" y1="0" x2="1" y2="0"><stop offset="0" stop-color="#c060c0"/><stop offset="0.5" stop-color="#e49ae4"/><stop offset="1" stop-color="#b050b0"/></linearGradient></defs><rect x="0.5" y="0.5" width="16" height="16" rx="2" fill="url(#fl644)" stroke="#a048a0" stroke-width="0.8"/><rect x="4" y="1" width="9" height="4" fill="#d8d8d8" stroke="#888" stroke-width="0.6"/><rect x="4.5" y="9" width="8" height="7" fill="#e8e0e8" stroke="#9a509a" stroke-width="0.6"/><path d="M6 11.5 H11 M6 13.5 H11" stroke="#a070a0" stroke-width="0.8"/></svg>
<div class="t" style="left:669.50px;top:589.00px;font-size:12px;line-height:12px;letter-spacing:-0.041px;color:#000;">Save (F2)</div>
<div style="left:632px;top:615px;width:135px;height:23px;background:#e1e1e1;border:1px solid #adadad;"></div>
<svg style="left:644px;top:619px" width="17" height="15"><defs><linearGradient id="fd" x1="0" y1="0" x2="0" y2="1"><stop offset="0" stop-color="#fff0a0"/><stop offset="1" stop-color="#e0b020"/></linearGradient></defs><path d="M0.5 2 H6 L7.5 3.5 H14 V13.5 H0.5 Z" fill="#e8c040" stroke="#b08a10" stroke-width="0.8"/><path d="M2.5 6.5 H16.5 L14 13.5 H0.5 Z" fill="url(#fd)" stroke="#b08a10" stroke-width="0.8"/></svg>
<div class="t" style="left:669.50px;top:622.00px;font-size:12px;line-height:12px;letter-spacing:0.154px;color:#000;">Load (F3)</div>
<div style="left:7px;top:655px;width:777px;height:1px;background:#dadada;"></div>
<svg style="left:774px;top:668px" width="9" height="9" fill="#a8a8a8"><rect x="6" y="0" width="2" height="2"/><rect x="3" y="3" width="2" height="2"/><rect x="6" y="3" width="2" height="2"/><rect x="0" y="6" width="2" height="2"/><rect x="3" y="6" width="2" height="2"/><rect x="6" y="6" width="2" height="2"/></svg>
<div style="left:1298px;top:53px;width:511px;height:592px;background:#b9d1ea;border:1px solid #1e1e1e;border-right-color:#5ac8ec;border-bottom-color:#2cc3ef;border-radius:7px 7px 0 0;"></div>
<div style="left:1299px;top:54px;width:509px;height:30px;background:linear-gradient(#98b3d3,#bcd3eb);border-radius:6px 6px 0 0;"></div>
<div style="left:1299px;top:54px;width:1px;height:590px;background:#f4f8fc;"></div>
<svg style="left:1310px;top:64px" width="12" height="16" shape-rendering="crispEdges"><rect x="3" y="0" width="1" height="1" fill="#000"/><rect x="4" y="0" width="1" height="1" fill="#000"/><rect x="6" y="0" width="1" height="1" fill="#000"/><rect x="7" y="0" width="1" height="1" fill="#000"/><rect x="8" y="0" width="1" height="1" fill="#000"/><rect x="2" y="1" width="1" height="1" fill="#000"/><rect x="3" y="1" width="1" height="1" fill="#f4f4f4"/><rect x="4" y="1" width="1" height="1" fill="#f4f4f4"/><rect x="5" y="1" width="1" height="1" fill="#000"/><rect x="6" y="1" width="1" height="1" fill="#000"/><rect x="7" y="1" width="1" height="1" fill="#f4f4f4"/><rect x="8" y="1" width="1" height="1" fill="#000"/><rect x="1" y="2" width="1" height="1" fill="#000"/><rect x="2" y="2" width="1" height="1" fill="#f4f4f4"/><rect x="3" y="2" width="1" height="1" fill="#000"/><rect x="4" y="2" width="1" height="1" fill="#000"/><rect x="5" y="2" width="1" height="1" fill="#f4f4f4"/><rect x="6" y="2" width="1" height="1" fill="#000"/><rect x="7" y="2" width="1" height="1" fill="#f4f4f4"/><rect x="8" y="2" width="1" height="1" fill="#000"/><rect x="0" y="3" width="1" height="1" fill="#000"/><rect x="1" y="3" width="1" height="1" fill="#f4f4f4"/><rect x="2" y="3" width="1" height="1" fill="#000"/><rect x="4" y="3" width="1" height="1" fill="#000"/><rect x="5" y="3" width="1" height="1" fill="#f4f4f4"/><rect x="6" y="3" width="1" height="1" fill="#000"/><rect x="7" y="3" width="1" height="1" fill="#f4f4f4"/><rect x="8" y="3" width="1" height="1" fill="#000"/><rect x="0" y="4" width="1" height="1" fill="#000"/><rect x="1" y="4" width="1" height="1" fill="#000"/><rect x="3" y="4" width="1" height="1" fill="#000"/><rect x="4" y="4" width="1" height="1" fill="#f4f4f4"/><rect x="5" y="4" width="1" height="1" fill="#000"/><rect x="6" y="4" width="1" height="1" fill="#000"/><rect x="7" y="4" width="1" height="1" fill="#f4f4f4"/><rect x="8" y="4" width="1" height="1" fill="#000"/><rect x="2" y="5" width="1" height="1" fill="#000"/><rect x="3" y="5" width="1" height="1" fill="#f4f4f4"/><rect x="4" y="5" width="1" height="1" fill="#000"/><rect x="6" y="5" width="1" height="1" fill="#000"/><rect x="7" y="5" width="1" height="1" fill="#f4f4f4"/><rect x="8" y="5" width="1" height="1" fill="#000"/><rect x="1" y="6" width="1" height="1" fill="#000"/><rect x="2" y="6" width="1" height="1" fill="#f4f4f4"/><rect x="3" y="6" width="1" height="1" fill="#000"/><rect x="6" y="6" width="1" height="1" fill="#000"/><rect x="7" y="6" width="1" height="1" fill="#f4f4f4"/><rect x="8" y="6" width="1" height="1" fill="#000"/><rect x="1" y="7" width="1" height="1" fill="#000"/><rect x="2" y="7" width="1" height="1" fill="#f4f4f4"/><rect x="3" y="7" width="1" height="1" fill="#000"/><rect x="6" y="7" width="1" height="1" fill="#000"/><rect x="7" y="7" width="1" height="1" fill="#f4f4f4"/><rect x="8" y="7" width="1" height="1" fill="#000"/><rect x="0" y="8" width="1" height="1" fill="#000"/><rect x="1" y="8" width="1" height="1" fill="#f4f4f4"/><rect x="2" y="8" width="1" height="1" fill="#000"/><rect x="6" y="8" width="1" height="1" fill="#000"/><rect x="7" y="8" width="1" height="1" fill="#f4f4f4"/><rect x="8" y="8" width="1" height="1" fill="#000"/><rect x="0" y="9" width="1" height="1" fill="#000"/><rect x="1" y="9" width="1" height="1" fill="#f4f4f4"/><rect x="2" y="9" width="1" height="1" fill="#000"/><rect x="6" y="9" width="1" height="1" fill="#000"/><rect x="7" y="9" width="1" height="1" fill="#f4f4f4"/><rect x="8" y="9" width="1" height="1" fill="#000"/><rect x="0" y="10" width="1" height="1" fill="#000"/><rect x="1" y="10" width="1" height="1" fill="#f4f4f4"/><rect x="2" y="10" width="1" height="1" fill="#000"/><rect x="3" y="10" width="1" height="1" fill="#000"/><rect x="4" y="10" width="1" height="1" fill="#000"/><rect x="5" y="10" width="1" height="1" fill="#000"/><rect x="6" y="10" width="1" height="1" fill="#000"/><rect x="7" y="10" width="1" height="1" fill="#f4f4f4"/><rect x="8" y="10" width="1" height="1" fill="#000"/><rect x="9" y="10" width="1" height="1" fill="#000"/><rect x="10" y="10" width="1" height="1" fill="#000"/><rect x="11" y="10" width="1" height="1" fill="#000"/><rect x="0" y="11" width="1" height="1" fill="#000"/><rect x="1" y="11" width="1" height="1" fill="#f4f4f4"/><rect x="2" y="11" width="1" height="1" fill="#f4f4f4"/><rect x="3" y="11" width="1" height="1" fill="#f4f4f4"/><rect x="4" y="11" width="1" height="1" fill="#f4f4f4"/><rect x="5" y="11" width="1" height="1" fill="#f4f4f4"/><rect x="6" y="11" width="1" height="1" fill="#f4f4f4"/><rect x="7" y="11" width="1" height="1" fill="#f4f4f4"/><rect x="8" y="11" width="1" height="1" fill="#f4f4f4"/><rect x="9" y="11" width="1" height="1" fill="#f4f4f4"/><rect x="10" y="11" width="1" height="1" fill="#f4f4f4"/><rect x="11" y="11" width="1" height="1" fill="#000"/><rect x="0" y="12" width="1" height="1" fill="#000"/><rect x="1" y="12" width="1" height="1" fill="#000"/><rect x="2" y="12" width="1" height="1" fill="#000"/><rect x="3" y="12" width="1" height="1" fill="#000"/><rect x="4" y="12" width="1" height="1" fill="#000"/><rect x="5" y="12" width="1" height="1" fill="#000"/><rect x="6" y="12" width="1" height="1" fill="#000"/><rect x="7" y="12" width="1" height="1" fill="#f4f4f4"/><rect x="8" y="12" width="1" height="1" fill="#000"/><rect x="9" y="12" width="1" height="1" fill="#000"/><rect x="10" y="12" width="1" height="1" fill="#000"/><rect x="11" y="12" width="1" height="1" fill="#000"/><rect x="6" y="13" width="1" height="1" fill="#000"/><rect x="7" y="13" width="1" height="1" fill="#f4f4f4"/><rect x="8" y="13" width="1" height="1" fill="#000"/><rect x="6" y="14" width="1" height="1" fill="#000"/><rect x="7" y="14" width="1" height="1" fill="#f4f4f4"/><rect x="8" y="14" width="1" height="1" fill="#000"/><rect x="6" y="15" width="1" height="1" fill="#000"/><rect x="7" y="15" width="1" height="1" fill="#000"/><rect x="8" y="15" width="1" height="1" fill="#000"/></svg>
<div class="t" style="left:1327.90px;top:67.00px;font-size:11.5px;line-height:11.5px;letter-spacing:-0.236px;color:#000;">Image  2021-09-25-2137_3-JD-C11HD_P5_L_Gain=260_22_Exp10ms_...</div>
<div style="left:1700px;top:63px;width:32px;height:18px;background:linear-gradient(#c8dbef,#b9cfe7 42%,#98b1cf 45%,#a3bcd9 75%,#b2cbe6);border:1px solid #3e4e68;border-radius:3px;box-shadow:inset 0 0 0 1px rgba(255,255,255,0.6);"></div>
<svg style="left:1710.0px;top:70.0px" width="12" height="6"><defs><linearGradient id="gmin" x1="0" y1="0" x2="0" y2="1"><stop offset="0" stop-color="#fff"/><stop offset="1" stop-color="#d8d8d8"/></linearGradient></defs><rect x="0.8" y="1.3" width="10" height="4" rx="1.2" fill="url(#gmin)" stroke="#3b4048" stroke-width="1.3"/></svg>
<div style="left:1734px;top:63px;width:32px;height:18px;background:linear-gradient(#c8dbef,#b9cfe7 42%,#98b1cf 45%,#a3bcd9 75%,#b2cbe6);border:1px solid #3e4e68;border-radius:3px;box-shadow:inset 0 0 0 1px rgba(255,255,255,0.6);"></div>
<svg style="left:1744.0px;top:67.0px" width="12" height="10"><rect x="0.8" y="0.8" width="10" height="8" rx="1.2" fill="#f4f4f4" stroke="#3b4048" stroke-width="1.3"/><rect x="3.3" y="3.5" width="5" height="2.6" fill="#b4c2d6" stroke="#3b4048" stroke-width="1"/></svg>
<div style="left:1768px;top:63px;width:32px;height:18px;background:linear-gradient(#eaa595,#e18d7d 42%,#c4391f 45%,#cb4a30 70%,#d6705a);border:1px solid #4e1414;border-radius:3px;box-shadow:inset 0 0 0 1px rgba(255,230,220,0.55);"></div>
<svg style="left:1778.0px;top:67.0px" width="12" height="10"><path d="M3.2 2.8 L8.8 7.2 M8.8 2.8 L3.2 7.2" stroke="#3b4048" stroke-width="4.2" stroke-linecap="square"/><path d="M3.2 2.8 L8.8 7.2 M8.8 2.8 L3.2 7.2" stroke="#fafafa" stroke-width="2.2" stroke-linecap="square"/></svg>
<div style="left:1306px;top:84px;width:496px;height:554px;background:#f0f0f0;"></div>
<svg style="left:1313px;top:93px" width="17" height="17"><defs><linearGradient id="fl1313" x1="0" y1="0" x2="1" y2="0"><stop offset="0" stop-color="#c060c0"/><stop offset="0.5" stop-color="#e49ae4"/><stop offset="1" stop-color="#b050b0"/></linearGradient></defs><rect x="0.5" y="0.5" width="16" height="16" rx="2" fill="url(#fl1313)" stroke="#a048a0" stroke-width="0.8"/><rect x="4" y="1" width="9" height="4" fill="#d8d8d8" stroke="#888" stroke-width="0.6"/><rect x="4.5" y="9" width="8" height="7" fill="#e8e0e8" stroke="#9a509a" stroke-width="0.6"/><path d="M6 11.5 H11 M6 13.5 H11" stroke="#a070a0" stroke-width="0.8"/></svg>
<div style="left:1337px;top:91px;width:1px;height:21px;background:#8c8c8c;"></div>
<div style="left:1340px;top:91px;width:1px;height:21px;background:#8c8c8c;"></div>
<div style="left:1481px;top:91px;width:1px;height:21px;background:#8c8c8c;"></div>
<div style="left:1484px;top:91px;width:1px;height:21px;background:#8c8c8c;"></div>
<svg style="left:1340px;top:85px" width="200" height="32"><defs><radialGradient id="tbb" cx="0.5" cy="0.3" r="0.7"><stop offset="0" stop-color="#e8f2ff"/><stop offset="0.55" stop-color="#8ab8ee"/><stop offset="1" stop-color="#b8e0ff"/></radialGradient><radialGradient id="tbd" cx="0.5" cy="0.3" r="0.7"><stop offset="0" stop-color="#c8c8c8"/><stop offset="0.5" stop-color="#606060"/><stop offset="1" stop-color="#5a5a5a"/></radialGradient><radialGradient id="tbl" cx="0.5" cy="0.3" r="0.7"><stop offset="0" stop-color="#ffffff"/><stop offset="0.6" stop-color="#d8d8d8"/><stop offset="1" stop-color="#f0f0f0"/></radialGradient></defs><circle cx="16.5" cy="16.5" r="7.4" fill="url(#tbb)" stroke="#4e6270" stroke-width="1.3"/><rect x="12.0" y="15.3" width="9" height="2.4" fill="#111a33"/><circle cx="43.5" cy="16.5" r="7.4" fill="url(#tbb)" stroke="#4e6270" stroke-width="1.3"/><circle cx="70.5" cy="16.5" r="7.4" fill="url(#tbb)" stroke="#4e6270" stroke-width="1.3"/><rect x="66.0" y="15.3" width="9" height="2.4" fill="#111a33"/><rect x="69.3" y="12.0" width="2.4" height="9" fill="#111a33"/><circle cx="97.5" cy="16.5" r="7.4" fill="url(#tbb)" stroke="#4e6270" stroke-width="1.3"/><path d="M93.5 15.0 L97.5 11.0 L101.5 15.0 Z M93.5 18.0 L97.5 22.0 L101.5 18.0 Z" fill="#111a33"/><circle cx="124.5" cy="16.5" r="7.4" fill="url(#tbb)" stroke="#4e6270" stroke-width="1.3"/><path d="M123.0 12.5 L119.0 16.5 L123.0 20.5 Z M126.0 12.5 L130.0 16.5 L126.0 20.5 Z" fill="#111a33"/><circle cx="159.5" cy="16.5" r="7.4" fill="url(#tbd)" stroke="#2a2a2a" stroke-width="1.3"/><circle cx="186.5" cy="16.5" r="7.4" fill="url(#tbl)" stroke="#8a8a8a" stroke-width="1.3"/></svg>
<div style="left:1306px;top:121px;width:494px;height:496px;background:#000;border:2px solid #a0a0a0;border-right-color:#f0f0f0;border-bottom-color:#fff;"></div>
<div style="left:1306px;top:614px;width:494px;height:2px;background:#a8a8a8;"></div>
<div style="left:1306px;top:616px;width:494px;height:1px;background:#fff;"></div>
<svg style="left:1308px;top:123px" width="490" height="490"><defs><linearGradient id="jbi" x1="0" y1="0" x2="0" y2="1"><stop offset="0.0162" stop-color="rgb(90,108,106)"/><stop offset="0.1023" stop-color="rgb(110,130,126)"/><stop offset="0.1807" stop-color="rgb(132,152,148)"/><stop offset="0.2251" stop-color="rgb(122,140,136)"/><stop offset="0.2721" stop-color="rgb(150,172,168)"/><stop offset="0.3060" stop-color="rgb(132,148,144)"/><stop offset="0.3426" stop-color="rgb(178,204,202)"/><stop offset="0.3739" stop-color="rgb(175,198,194)"/><stop offset="0.4000" stop-color="rgb(160,170,160)"/><stop offset="0.4157" stop-color="rgb(146,142,125)"/><stop offset="0.4313" stop-color="rgb(124,112,96)"/><stop offset="0.4444" stop-color="rgb(138,130,113)"/><stop offset="0.4627" stop-color="rgb(158,157,139)"/><stop offset="0.5123" stop-color="rgb(162,164,145)"/><stop offset="0.5332" stop-color="rgb(160,180,176)"/><stop offset="0.5984" stop-color="rgb(162,184,180)"/><stop offset="0.6298" stop-color="rgb(140,156,156)"/><stop offset="0.6559" stop-color="rgb(125,142,146)"/><stop offset="0.6820" stop-color="rgb(150,172,174)"/><stop offset="0.7133" stop-color="rgb(175,204,204)"/><stop offset="0.7420" stop-color="rgb(160,182,180)"/><stop offset="0.7681" stop-color="rgb(138,156,154)"/><stop offset="0.8021" stop-color="rgb(150,170,166)"/><stop offset="0.8334" stop-color="rgb(146,166,162)"/><stop offset="0.8856" stop-color="rgb(140,160,156)"/><stop offset="0.9379" stop-color="rgb(132,152,148)"/><stop offset="1.0000" stop-color="rgb(112,130,128)"/></linearGradient><radialGradient id="jli" cx="0.5" cy="0.5" r="0.5"><stop offset="0" stop-color="rgb(5,20,25)" stop-opacity="0.000"/><stop offset="0.45" stop-color="rgb(5,20,25)" stop-opacity="0.024"/><stop offset="0.6" stop-color="rgb(5,20,25)" stop-opacity="0.084"/><stop offset="0.75" stop-color="rgb(5,20,25)" stop-opacity="0.216"/><stop offset="0.85" stop-color="rgb(5,20,25)" stop-opacity="0.384"/><stop offset="0.92" stop-color="rgb(5,20,25)" stop-opacity="0.576"/><stop offset="0.97" stop-color="rgb(5,20,25)" stop-opacity="0.744"/><stop offset="1.0" stop-color="rgb(5,20,25)" stop-opacity="0.888"/></radialGradient><radialGradient id="jli2" cx="0.5" cy="0.5" r="0.5"><stop offset="0" stop-color="rgb(5,20,25)" stop-opacity="0.000"/><stop offset="0.45" stop-color="rgb(5,20,25)" stop-opacity="0.009"/><stop offset="0.6" stop-color="rgb(5,20,25)" stop-opacity="0.032"/><stop offset="0.75" stop-color="rgb(5,20,25)" stop-opacity="0.081"/><stop offset="0.85" stop-color="rgb(5,20,25)" stop-opacity="0.144"/><stop offset="0.92" stop-color="rgb(5,20,25)" stop-opacity="0.216"/><stop offset="0.97" stop-color="rgb(5,20,25)" stop-opacity="0.279"/><stop offset="1.0" stop-color="rgb(5,20,25)" stop-opacity="0.333"/></radialGradient><filter id="jfi" x="-50%" y="-50%" width="200%" height="200%"><feGaussianBlur stdDeviation="3.5"/></filter><filter id="jsoft" x="-30%" y="-30%" width="160%" height="160%"><feGaussianBlur stdDeviation="5"/></filter><clipPath id="jci"><ellipse cx="245" cy="242.60000000000002" rx="200" ry="188"/></clipPath><clipPath id="jci2"><ellipse cx="260" cy="243" rx="157" ry="144"/></clipPath></defs><g filter="url(#jsoft)"><g clip-path="url(#jci)"><ellipse cx="245" cy="242.60000000000002" rx="200" ry="188" fill="url(#jbi)"/><g filter="url(#jfi)"><ellipse cx="235.0" cy="133.6" rx="120.0" ry="4.7" fill="#6f807c" opacity="0.3"/><ellipse cx="265.0" cy="163.6" rx="120.0" ry="3.8" fill="#7a8a86" opacity="0.3"/><ellipse cx="365.0" cy="144.8" rx="24.0" ry="5.6" fill="#607070" opacity="0.35"/><ellipse cx="185.0" cy="291.5" rx="90.0" ry="5.6" fill="#74848a" opacity="0.35"/><ellipse cx="374.2" cy="291.5" rx="28.0" ry="8.5" fill="#7a6a5a" opacity="0.55"/><ellipse cx="285.0" cy="346.0" rx="100.0" ry="3.8" fill="#7a8a86" opacity="0.25"/><ellipse cx="162.4" cy="196.9" rx="11.0" ry="4.5" fill="#3c3c48" opacity="0.85"/><ellipse cx="261.2" cy="196.9" rx="10.0" ry="4.1" fill="#3c3c48" opacity="0.85"/><ellipse cx="295.0" cy="288.7" rx="14.0" ry="5.6" fill="#cfe2de" opacity="0.35"/><ellipse cx="127.4" cy="357.1" rx="8.0" ry="3.8" fill="#b8cec8" opacity="0.35"/><ellipse cx="190.2" cy="359.9" rx="8.0" ry="3.8" fill="#b8cec8" opacity="0.35"/><ellipse cx="226.4" cy="359.9" rx="8.0" ry="3.8" fill="#b8cec8" opacity="0.35"/><ellipse cx="266.6" cy="357.8" rx="8.0" ry="3.8" fill="#b8cec8" opacity="0.35"/><ellipse cx="329.8" cy="312.5" rx="20.6" ry="12.4" fill="#9c8a74" opacity="0.85"/><ellipse cx="329.8" cy="312.5" rx="14.0" ry="8.5" fill="#a08870" opacity="0.7"/></g><ellipse cx="245" cy="242.60000000000002" rx="200" ry="188" fill="url(#jli)"/></g></g><g clip-path="url(#jci2)"><ellipse cx="245" cy="242.60000000000002" rx="200" ry="188" fill="url(#jbi)"/><g filter="url(#jfi)"><ellipse cx="235.0" cy="133.6" rx="120.0" ry="4.7" fill="#6f807c" opacity="0.3"/><ellipse cx="265.0" cy="163.6" rx="120.0" ry="3.8" fill="#7a8a86" opacity="0.3"/><ellipse cx="365.0" cy="144.8" rx="24.0" ry="5.6" fill="#607070" opacity="0.35"/><ellipse cx="185.0" cy="291.5" rx="90.0" ry="5.6" fill="#74848a" opacity="0.35"/><ellipse cx="374.2" cy="291.5" rx="28.0" ry="8.5" fill="#7a6a5a" opacity="0.55"/><ellipse cx="285.0" cy="346.0" rx="100.0" ry="3.8" fill="#7a8a86" opacity="0.25"/><ellipse cx="162.4" cy="196.9" rx="11.0" ry="4.5" fill="#3c3c48" opacity="0.85"/><ellipse cx="261.2" cy="196.9" rx="10.0" ry="4.1" fill="#3c3c48" opacity="0.85"/><ellipse cx="295.0" cy="288.7" rx="14.0" ry="5.6" fill="#cfe2de" opacity="0.35"/><ellipse cx="127.4" cy="357.1" rx="8.0" ry="3.8" fill="#b8cec8" opacity="0.35"/><ellipse cx="190.2" cy="359.9" rx="8.0" ry="3.8" fill="#b8cec8" opacity="0.35"/><ellipse cx="226.4" cy="359.9" rx="8.0" ry="3.8" fill="#b8cec8" opacity="0.35"/><ellipse cx="266.6" cy="357.8" rx="8.0" ry="3.8" fill="#b8cec8" opacity="0.35"/><ellipse cx="329.8" cy="312.5" rx="20.6" ry="12.4" fill="#9c8a74" opacity="0.85"/><ellipse cx="329.8" cy="312.5" rx="14.0" ry="8.5" fill="#a08870" opacity="0.7"/></g><ellipse cx="245" cy="242.60000000000002" rx="200" ry="188" fill="url(#jli2)"/><ellipse cx="260" cy="243" rx="157" ry="144" fill="#c8ffff" opacity="0.12"/></g><ellipse cx="260" cy="243" rx="157" ry="144" fill="none" stroke="#2a3030" stroke-width="1" opacity="0.75"/><ellipse cx="260" cy="243" rx="155.8" ry="142.8" fill="none" stroke="#e0f0f0" stroke-width="0.8" opacity="0.35"/></svg>
<div style="left:1306px;top:617px;width:346px;height:21px;overflow:hidden;"><div class="t" style="left:1.40px;top:6.00px;font-size:12px;line-height:12px;letter-spacing:0.462px;color:#000;">D:\Photos\!drop\ZWO\Jup\20210925\pipp_20210926_092138</div></div>
<div style="left:1652px;top:619px;width:1px;height:18px;background:#d7d7d7;"></div>
<div style="left:1701px;top:619px;width:1px;height:18px;background:#d7d7d7;"></div>
<div class="t" style="left:1660.30px;top:623.00px;font-size:12px;line-height:12px;letter-spacing:0.752px;color:#000;">100%</div>
<div class="t" style="left:1710.30px;top:623.00px;font-size:12px;line-height:12px;letter-spacing:0.327px;color:#000;">Colour (γ 1.00)</div>
</body></html>
